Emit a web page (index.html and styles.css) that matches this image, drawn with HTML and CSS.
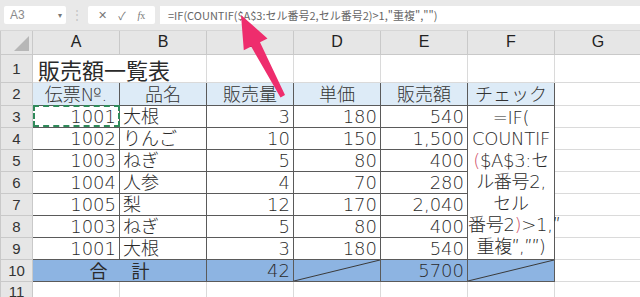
FILE: index.html
```html
<!DOCTYPE html>
<html lang="ja">
<head>
  <meta charset="UTF-8">
  <title>販売額一覧表</title>
  <link rel="stylesheet" href="styles.css">
</head>
<body>
  <!-- Formula bar -->
  <div class="toolbar">
    <div class="namebox">A3<span class="caret">▾</span></div>
    <div class="grip">⋮</div>
    <div class="fxbox">
      <span class="fx-btn">✕</span>
      <span class="fx-btn">✓</span>
      <span class="fx-btn fx"><i>f</i>x</span>
    </div>
    <div class="formula">=IF(COUNTIF($A$3:セル番号2,セル番号2)&gt;1,"重複","")</div>
  </div>

  <!-- Sheet -->
  <div class="sheet-wrap">
    <table class="sheet">
      <colgroup>
        <col class="c-rh">
        <col class="c-col"><col class="c-col"><col class="c-col"><col class="c-col">
        <col class="c-col"><col class="c-col"><col class="c-col">
      </colgroup>
      <tr class="r-head">
        <th class="corner"><span class="tri"></span></th>
        <th>A</th><th>B</th><th>C</th><th>D</th><th>E</th><th>F</th><th>G</th>
      </tr>
      <tr class="r-title">
        <th class="rh">1</th>
        <td class="title">販売額一覧表</td><td></td><td></td><td></td><td></td><td></td><td></td>
      </tr>
      <tr class="r-std">
        <th class="rh">2</th>
        <td class="hd">伝票№.</td><td class="hd">品名</td><td class="hd">販売量</td>
        <td class="hd">単価</td><td class="hd">販売額</td><td class="hd">チェック</td><td></td>
      </tr>
      <tr class="r-std">
        <th class="rh">3</th>
        <td class="tb num sel">1001</td><td class="tb">大根</td><td class="tb num">3</td>
        <td class="tb num">180</td><td class="tb num">540</td>
        <td class="tb check" rowspan="7">=IF(<br>COUNTIF<br><span class="paren">(</span>$A$3:セ<br>ル番号2,<br>セル<br>番号2<span class="paren">)</span>&gt;1,″<br>重複″,″″)</td>
        <td></td>
      </tr>
      <tr class="r-std">
        <th class="rh">4</th>
        <td class="tb num">1002</td><td class="tb">りんご</td><td class="tb num">10</td>
        <td class="tb num">150</td><td class="tb num">1,500</td><td></td>
      </tr>
      <tr class="r-std">
        <th class="rh">5</th>
        <td class="tb num">1003</td><td class="tb">ねぎ</td><td class="tb num">5</td>
        <td class="tb num">80</td><td class="tb num">400</td><td></td>
      </tr>
      <tr class="r-std">
        <th class="rh">6</th>
        <td class="tb num">1004</td><td class="tb">人参</td><td class="tb num">4</td>
        <td class="tb num">70</td><td class="tb num">280</td><td></td>
      </tr>
      <tr class="r-std">
        <th class="rh">7</th>
        <td class="tb num">1005</td><td class="tb">梨</td><td class="tb num">12</td>
        <td class="tb num">170</td><td class="tb num">2,040</td><td></td>
      </tr>
      <tr class="r-std">
        <th class="rh">8</th>
        <td class="tb num">1003</td><td class="tb">ねぎ</td><td class="tb num">5</td>
        <td class="tb num">80</td><td class="tb num">400</td><td></td>
      </tr>
      <tr class="r-std">
        <th class="rh">9</th>
        <td class="tb num">1001</td><td class="tb">大根</td><td class="tb num">3</td>
        <td class="tb num">180</td><td class="tb num">540</td><td></td>
      </tr>
      <tr class="r-std">
        <th class="rh">10</th>
        <td class="tb total total-label" colspan="2">合<span class="gap"></span>計</td>
        <td class="tb total num">42</td>
        <td class="tb total diag">
          <svg class="slash" viewBox="0 0 100 100" preserveAspectRatio="none"><line x1="0" y1="100" x2="100" y2="0" vector-effect="non-scaling-stroke"/></svg>
        </td>
        <td class="tb total num">5700</td>
        <td class="tb total diag">
          <svg class="slash" viewBox="0 0 100 100" preserveAspectRatio="none"><line x1="0" y1="100" x2="100" y2="0" vector-effect="non-scaling-stroke"/></svg>
        </td>
        <td></td>
      </tr>
      <tr class="r-std">
        <th class="rh">11</th>
        <td></td><td></td><td></td><td></td><td></td><td></td><td></td>
      </tr>
    </table>
  </div>

  <!-- Callout arrow -->
  <svg class="arrow" width="640" height="297" viewBox="0 0 640 297">
    <polygon fill="#ee2d6d" points="241,15 267.5,38.5 260,42.3 285,95 280.5,97.5 251.2,46.6 243.8,50.3"/>
  </svg>
</body>
</html>
```

FILE: styles.css
```css
html, body {
  margin: 0;
  width: 640px;
  height: 297px;
  overflow: hidden;
  background: #fff;
}
body {
  position: relative;
  font-family: "Liberation Sans", "Noto Sans CJK JP", sans-serif;
}

/* formula bar */
.toolbar {
  height: 31px;
  background: #e9e9e9;
  display: flex;
  align-items: center;
  padding: 0 0 0 4px;
  box-sizing: border-box;
  border-bottom: 1px solid #d6d6d6;
}
.namebox {
  width: 62px;
  height: 18px;
  background: #fff;
  box-sizing: border-box;
  padding: 0 4px 0 6px;
  display: flex;
  align-items: center;
  justify-content: space-between;
  font-size: 12px;
  color: #8a8a8a;
  border-radius: 2px;
}
.caret {
  font-size: 8px;
  color: #777;
}
.grip {
  width: 22px;
  text-align: center;
  color: #c4c4c4;
  font-size: 12px;
}
.fxbox {
  width: 67px;
  height: 18px;
  background: #fff;
  border-radius: 2px;
  display: flex;
  align-items: center;
  justify-content: space-around;
  padding: 0 4px;
  box-sizing: border-box;
}
.fx-btn {
  font-size: 11px;
  color: #777;
}
.fx {
  font-family: "Liberation Serif", serif;
  font-size: 10px;
}
.formula {
  flex: 1;
  margin-left: 5px;
  height: 18px;
  background: #fff;
  padding-left: 8px;
  font-size: 11px;
  line-height: 18px;
  color: #666;
  font-family: "Noto Sans CJK JP", sans-serif;
  white-space: nowrap;
}

/* sheet */
.sheet-wrap {
  width: 640px;
}
.sheet {
  border-collapse: collapse;
  table-layout: fixed;
  width: 641px;
}
.c-rh {
  width: 32px;
}
.c-col {
  width: 87px;
}
.sheet td {
  padding: 0 3px;
  border: 1px solid #dadada;
  white-space: nowrap;
  overflow: visible;
  vertical-align: middle;
  color: #2a2a2a;
  font-family: "DejaVu Sans", "Noto Sans CJK JP", sans-serif;
  font-weight: 200;
  font-size: 18px;
  line-height: 21px;
}
.r-head {
  height: 23px;
}
.r-title {
  height: 28px;
}
.r-std {
  height: 21.5px;
}
.r-head th {
  background: #e6e6e6;
  border: 1px solid #c9c9c9;
  border-top: none;
  font-weight: normal;
  font-size: 16px;
  color: #222;
  padding: 0;
}
.corner {
  position: relative;
}
.tri {
  position: absolute;
  right: 3px;
  bottom: 3px;
  width: 0;
  height: 0;
  border-left: 15px solid transparent;
  border-bottom: 15px solid #b7b7b7;
}
.rh {
  background: #e6e6e6;
  border: 1px solid #c9c9c9;
  font-weight: normal;
  font-size: 15px;
  color: #333;
  padding: 0;
  text-align: center;
}
.sheet td.title {
  font-family: "Noto Sans CJK JP", sans-serif;
  font-weight: normal;
  font-size: 22px;
  line-height: 26px;
  padding: 1px 0 0 5px;
  border-right-color: transparent;
}
.sheet td.hd {
  background: #ddebf7;
  border: 1px solid #5a5a5a;
  text-align: center;
  color: #333;
  padding-top: 1px;
}
.sheet td.tb {
  border: 1px solid #5a5a5a;
}
.num {
  text-align: right;
}
.sheet td.sel {
  outline: 2px dashed #2f8a5a;
  outline-offset: -2px;
}
.sheet td.check {
  text-align: center;
  line-height: 21.5px;
  padding: 0;
  letter-spacing: -0.3px;
}
.paren {
  color: #d0506a;
}
.sheet td.total {
  background: #8db4e2;
}
.sheet td.total-label {
  text-align: center;
  font-family: "Noto Sans CJK JP", sans-serif;
  font-weight: normal;
}
.gap {
  display: inline-block;
  width: 24px;
}
.sheet td.diag {
  padding: 0;
  position: relative;
}
.slash {
  position: absolute;
  left: 0;
  top: 0;
  width: 100%;
  height: 100%;
}
.slash line {
  stroke: #3a3a3a;
  stroke-width: 1;
}

/* callout arrow sits over the sheet */
.arrow {
  position: absolute;
  left: 0;
  top: 0;
  pointer-events: none;
}
```
